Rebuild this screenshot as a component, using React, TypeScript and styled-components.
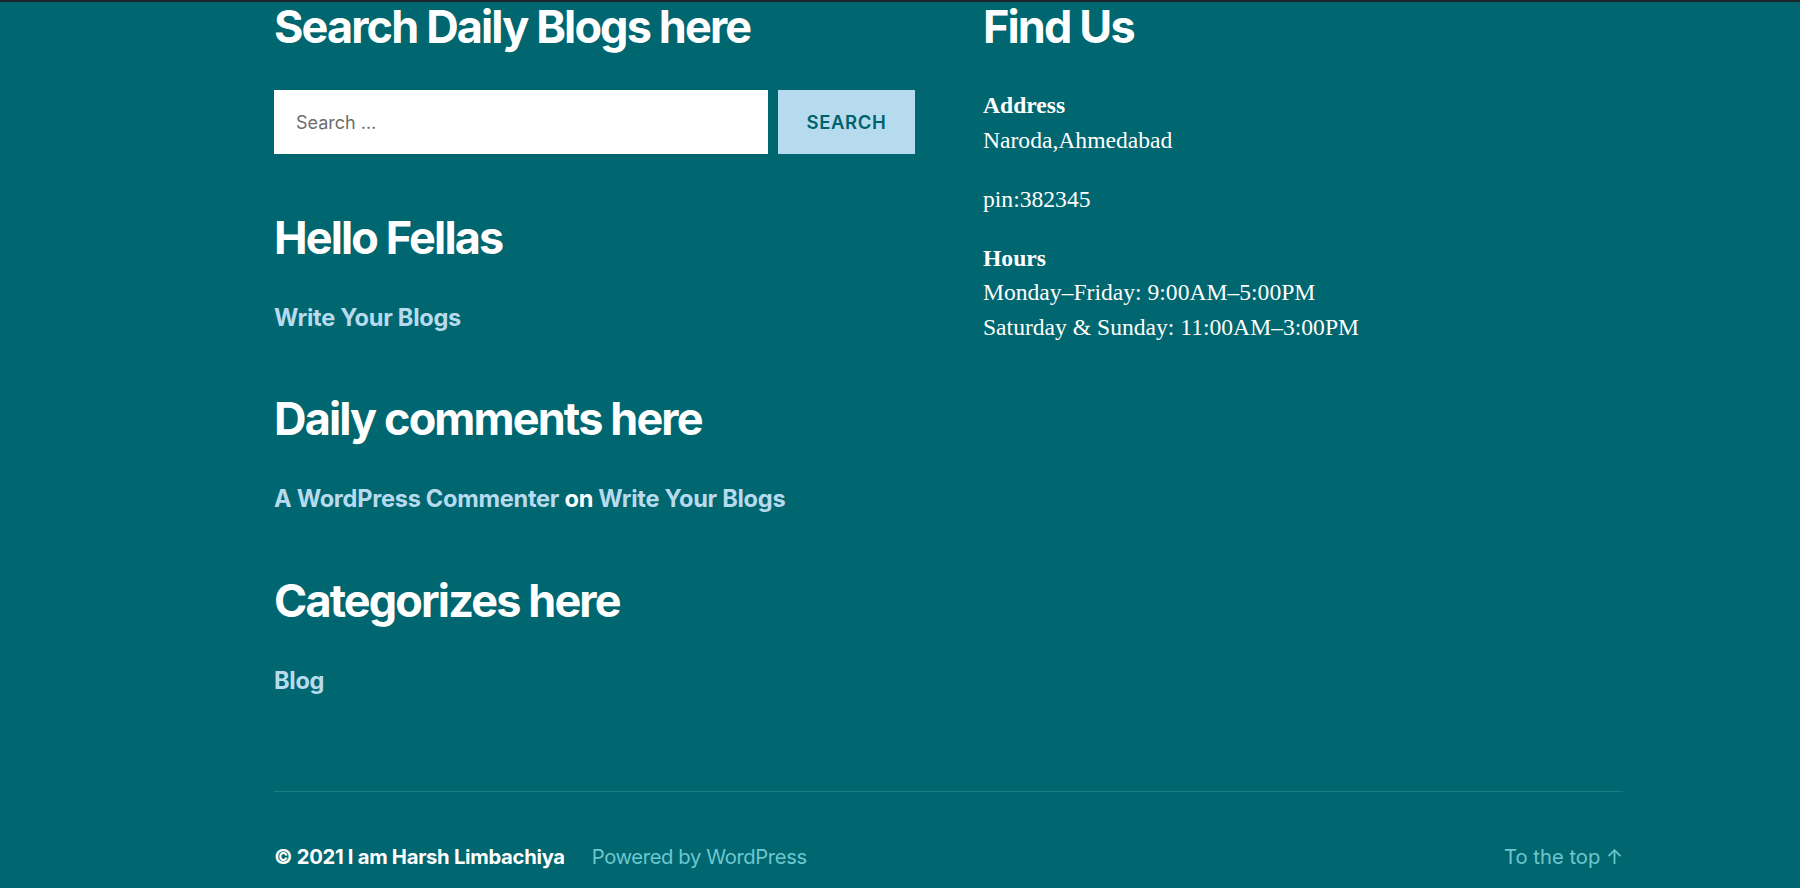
import React from "react";
import styled, { createGlobalStyle } from "styled-components";

const GlobalStyle = createGlobalStyle`
  html, body { margin: 0; padding: 0; }
  body {
    background: #00666f;
    font-family: Inter, "Noto Sans", sans-serif;
    color: #ffffff;
    -webkit-font-smoothing: antialiased;
  }
  * { box-sizing: border-box; }
`;

const TopStrip = styled.div`
  height: 2px;
  background: #1c2528;
`;

const Page = styled.div`
  width: 1349px;
  margin-left: 274px;
`;

const WidgetGrid = styled.div`
  display: grid;
  grid-template-columns: 641px 640px;
  column-gap: 68px;
`;

const Column = styled.div`
  display: flex;
  flex-direction: column;
  gap: 59px;
`;

const Widget = styled.section``;

const WidgetTitle = styled.h2<{ $space?: number }>`
  margin: 0 0 ${(p) => p.$space ?? 39}px;
  font-family: Inter, sans-serif;
  font-size: 45px;
  line-height: 49px;
  font-weight: 700;
  letter-spacing: -0.0415em;
  color: #ffffff;
`;

const SearchForm = styled.form`
  display: flex;
  gap: 10px;
  height: 64px;
`;

const SearchInput = styled.input`
  flex: 1;
  height: 64px;
  border: none;
  background: #ffffff;
  padding: 0 22px;
  font-family: Inter, sans-serif;
  font-size: 18px;
  color: #333;
  outline: none;
  &::placeholder { color: #6d6d6d; }
`;

const SearchButton = styled.button`
  width: 137px;
  height: 64px;
  border: none;
  background: #b7dbee;
  color: #00626d;
  font-family: Inter, sans-serif;
  font-size: 18.5px;
  font-weight: 600;
  letter-spacing: 0.0333em;
  text-transform: uppercase;
  padding: 0;
`;

const LinkLine = styled.p`
  margin: 0;
  font-family: Inter, sans-serif;
  font-size: 23.6px;
  line-height: 34.4px;
  font-weight: 700;
  letter-spacing: -0.012em;
  color: #ffffff;
`;

const WidgetLink = styled.a`
  color: #b7dbee;
  text-decoration: none;
`;

const InfoText = styled.p`
  margin: 0 0 24.5px;
  font-family: "Liberation Serif", "Times New Roman", serif;
  font-size: 23.6px;
  line-height: 34.5px;
  color: #ffffff;
`;

const Footer = styled.footer`
  margin-top: 93px;
  border-top: 1px solid #1b7c86;
  padding-top: 50px;
  display: flex;
  justify-content: space-between;
  align-items: baseline;
  font-family: Inter, sans-serif;
  font-size: 20.25px;
  line-height: 30px;
`;

const Credits = styled.div`
  display: flex;
  gap: 27px;
  align-items: baseline;
`;

const Copyright = styled.span`
  font-weight: 700;
  color: #ffffff;
  letter-spacing: -0.015em;
`;

const Muted = styled.a<{ $tight?: boolean }>`
  color: #6cc7d0;
  text-decoration: none;
  font-weight: 400;
  letter-spacing: ${(p) => (p.$tight ? "-0.02em" : "0")};
`;

export default function App() {
  return (
    <>
      <GlobalStyle />
      <TopStrip />
      <Page>
        <WidgetGrid>
          <Column>
            <Widget>
              <WidgetTitle>Search Daily Blogs here</WidgetTitle>
              <SearchForm onSubmit={(e) => e.preventDefault()}>
                <SearchInput type="search" placeholder="Search …" />
                <SearchButton type="submit">Search</SearchButton>
              </SearchForm>
            </Widget>
            <Widget>
              <WidgetTitle>Hello Fellas</WidgetTitle>
              <LinkLine>
                <WidgetLink href="#">Write Your Blogs</WidgetLink>
              </LinkLine>
            </Widget>
            <Widget>
              <WidgetTitle>Daily comments here</WidgetTitle>
              <LinkLine>
                <WidgetLink href="#">A WordPress Commenter</WidgetLink> on{" "}
                <WidgetLink href="#">Write Your Blogs</WidgetLink>
              </LinkLine>
            </Widget>
            <Widget>
              <WidgetTitle>Categorizes here</WidgetTitle>
              <LinkLine>
                <WidgetLink href="#">Blog</WidgetLink>
              </LinkLine>
            </Widget>
          </Column>
          <Column>
            <Widget>
              <WidgetTitle $space={37}>Find Us</WidgetTitle>
              <InfoText>
                <strong>Address</strong>
                <br />
                Naroda,Ahmedabad
              </InfoText>
              <InfoText>pin:382345</InfoText>
              <InfoText>
                <strong>Hours</strong>
                <br />
                Monday–Friday: 9:00AM–5:00PM
                <br />
                Saturday &amp; Sunday: 11:00AM–3:00PM
              </InfoText>
            </Widget>
          </Column>
        </WidgetGrid>
        <Footer>
          <Credits>
            <Copyright>© 2021 I am Harsh Limbachiya</Copyright>
            <Muted href="#" $tight>Powered by WordPress</Muted>
          </Credits>
          <Muted href="#">To the top ↑</Muted>
        </Footer>
      </Page>
    </>
  );
}
